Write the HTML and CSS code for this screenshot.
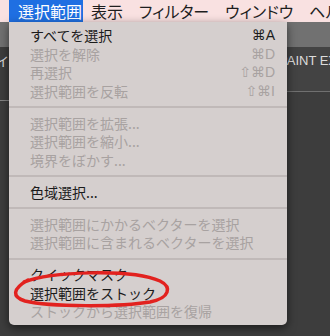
FILE: index.html
```html
<!DOCTYPE html>
<html lang="ja">
<head>
<meta charset="UTF-8" />
<title>選択範囲メニュー</title>
<meta name="viewport" content="width=device-width, initial-scale=1" />
<link rel="stylesheet" href="styles.css">
</head>
<body>

<div class="screen">
  <!-- メニューバー -->
  <div class="menubar">
    <span class="mb-item active">選択範囲</span>
    <span class="mb-item">表示</span>
    <span class="mb-item">フィルター</span>
    <span class="mb-item">ウィンドウ</span>
    <span class="mb-item">ヘルプ</span>
  </div>

  <!-- 後ろの作業エリア -->
  <div class="workspace">
    <div class="toolstrip"></div>
    <div class="tabbar">
      <div class="tab tab-left"><span>レイ</span></div>
      <div class="tab tab-right">PAINT EXAMPLE</div>
    </div>
  </div>

  <!-- プルダウンメニュー -->
  <div class="dropdown">
    <div class="item"><span>すべてを選択</span><span class="key">⌘A</span></div>
    <div class="item off"><span>選択を解除</span><span class="key">⌘D</span></div>
    <div class="item off"><span>再選択</span><span class="key">⇧⌘D</span></div>
    <div class="item off"><span>選択範囲を反転</span><span class="key">⇧⌘I</span></div>
    <div class="sep"></div>
    <div class="item off"><span>選択範囲を拡張...</span></div>
    <div class="item off"><span>選択範囲を縮小...</span></div>
    <div class="item off"><span>境界をぼかす...</span></div>
    <div class="sep"></div>
    <div class="item"><span>色域選択...</span></div>
    <div class="sep"></div>
    <div class="item off"><span>選択範囲にかかるベクターを選択</span></div>
    <div class="item off"><span>選択範囲に含まれるベクターを選択</span></div>
    <div class="sep"></div>
    <div class="item"><span>クイックマスク</span></div>
    <div class="item"><span>選択範囲をストック</span></div>
    <div class="item off"><span>ストックから選択範囲を復帰</span></div>
  </div>

  <!-- 赤い丸印 -->
  <svg class="mark" width="330" height="336" viewBox="0 0 330 336">
    <path d="M24 282 C50 272, 130 268, 160 281 C172 287, 170 298, 150 302 C120 307, 50 307, 25 301 C12 297, 12 289, 28 280" />
  </svg>
</div>

</body>
</html>
```

FILE: styles.css
```css
body { margin: 0; padding: 0; background: #3d3d3d; overflow: hidden; }
.screen { position: relative; width: 330px; height: 336px; overflow: hidden; font-family: "Noto Sans CJK JP", sans-serif; }

.menubar { display: flex; height: 22px; line-height: 22px; padding-left: 9px; background: #f9e1e1; color: #1e1e1e; font-size: 16px; white-space: nowrap; overflow: hidden; }
.mb-item { padding: 0 8px; font-feature-settings: "palt"; }
.mb-item.active { background: #1f6fe2; color: #fff; padding: 0 1px 0 9px; font-feature-settings: normal; }

.workspace { height: 314px; background: #3d3d3d; }
.toolstrip { height: 25px; background: #717171; }
.tabbar { display: flex; justify-content: space-between; }
.tab { color: #dcdcdc; font-family: "Liberation Sans", sans-serif; font-size: 13px; white-space: nowrap; overflow: hidden; }
.tab-left { display: flex; justify-content: flex-end; width: 9px; height: 53px; line-height: 28px; border-bottom: 1px solid #858585; font-family: "Noto Sans CJK JP", sans-serif; }
.tab-right { width: 51px; height: 44px; line-height: 28px; background: #434343; border-bottom: 1px solid #707070; }

.dropdown { position: absolute; left: 9px; top: 22px; width: 278px; padding: 4px 0; background: #d5cfce; border-radius: 0 0 5px 5px; box-shadow: 0 3px 10px rgba(0,0,0,0.55); font-size: 14px; }
.item { display: flex; justify-content: space-between; height: 18.5px; line-height: 18.5px; padding: 0 12px 0 21px; color: #1b1b1b; white-space: nowrap; }
.item.off { color: #a8a2a1; }
.key { font-family: "Liberation Sans", "DejaVu Sans", sans-serif; font-size: 14px; }
.sep { height: 2px; margin: 6px 0 5.5px; background: #c0b9b8; }

.mark { position: absolute; left: 0; top: 0; pointer-events: none; }
.mark path { fill: none; stroke: #e2221f; stroke-width: 3.5; stroke-linecap: round; }
```
